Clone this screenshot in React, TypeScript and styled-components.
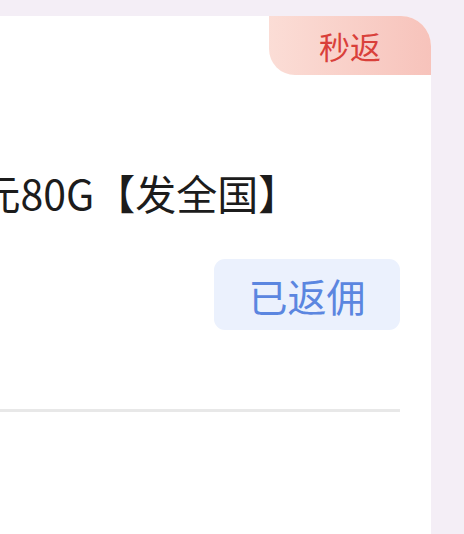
import React from "react";
import styled, { createGlobalStyle } from "styled-components";

const GlobalStyle = createGlobalStyle`
  html, body {
    margin: 0;
    padding: 0;
    background: #f4eef6;
    overflow: hidden;
  }
  body {
    font-family: "Noto Sans CJK SC", "Noto Sans", sans-serif;
  }
`;

const Page = styled.div`
  display: flex;
  padding-top: 16px;
  height: 534px;
  box-sizing: border-box;
`;

const Card = styled.div`
  position: relative;
  flex: none;
  margin-left: -295px;
  width: 726px;
  background: #ffffff;
  border-top-right-radius: 30px;
  display: flex;
  flex-direction: column;
  padding-left: 24px;
  padding-right: 31px;
  box-sizing: border-box;
`;

const Badge = styled.div`
  position: absolute;
  top: 0;
  right: 0;
  width: 162px;
  height: 59px;
  display: flex;
  align-items: center;
  justify-content: center;
  border-top-right-radius: 30px;
  border-bottom-left-radius: 26px;
  background: linear-gradient(90deg, #fbddd6 0%, #f7c3bb 100%);
  color: #d9403a;
  font-size: 31px;
`;

const Title = styled.div`
  margin-top: 152px;
  font-size: 41px;
  line-height: 48px;
  color: #1c1c1c;
  white-space: nowrap;
`;

const ActionRow = styled.div`
  display: flex;
  justify-content: flex-end;
  margin-top: 43px;
`;

const StatusButton = styled.div`
  width: 186px;
  height: 71px;
  border-radius: 11px;
  background: #ebf1fd;
  color: #5b86e0;
  font-size: 39px;
  display: flex;
  align-items: center;
  justify-content: center;
`;

const Divider = styled.div`
  margin-top: 79px;
  height: 3px;
  background: #e8e8e8;
`;

export default function App() {
  return (
    <>
      <GlobalStyle />
      <Page>
        <Card>
          <Badge>秒返</Badge>
          <Title>电信流量卡29元80G【发全国】</Title>
          <ActionRow>
            <StatusButton>已返佣</StatusButton>
          </ActionRow>
          <Divider />
        </Card>
      </Page>
    </>
  );
}
